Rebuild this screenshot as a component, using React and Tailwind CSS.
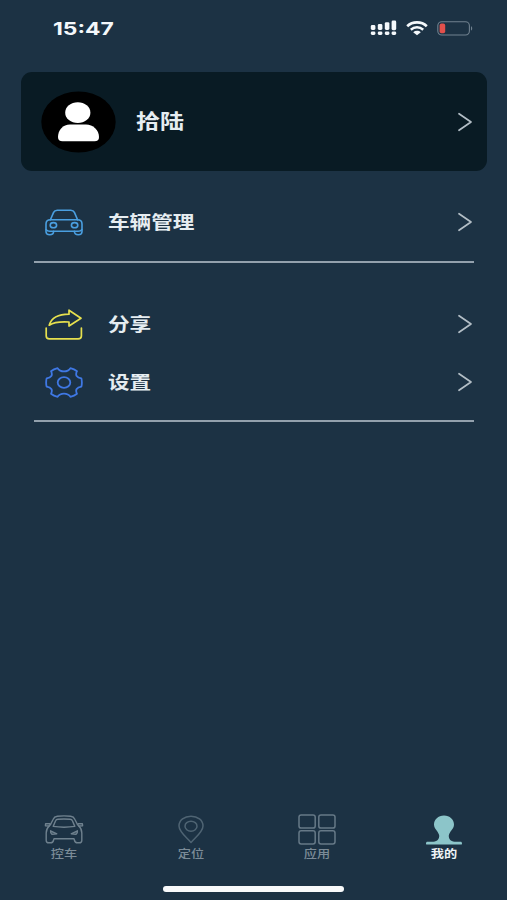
import clsx from "clsx";

const FONT = "font-['Inter','Noto_Sans_CJK_SC',sans-serif]";

// -------------------------
// ICONS
// -------------------------
function SignalIcon() {
  return (
    <svg width="27" height="16" viewBox="0 0 27 16" fill="#f4f8fb">
      <rect x="0.8" y="5" width="4.6" height="5" rx="1.4" />
      <rect x="7.8" y="4" width="4.6" height="6" rx="1.4" />
      <rect x="14.8" y="2.2" width="4.6" height="7.8" rx="1.4" />
      <rect x="21.6" y="0.6" width="4.6" height="9.6" rx="1.4" />
      <rect x="0.8" y="11.4" width="4.6" height="3.6" rx="1.4" />
      <rect x="7.8" y="11.4" width="4.6" height="3.6" rx="1.4" />
      <rect x="14.8" y="11.4" width="4.6" height="3.6" rx="1.4" />
      <rect x="21.6" y="11.4" width="4.6" height="3.6" rx="1.4" />
    </svg>
  );
}

function WifiIcon() {
  return (
    <svg width="22" height="15" viewBox="0 0 22 15" fill="none" stroke="#f4f8fb">
      <path d="M1.2 5.2C6.6 0.2 15.4 0.2 20.8 5.2" strokeWidth="2.7" />
      <path d="M4.8 8.7C8.4 5.5 13.6 5.5 17.2 8.7" strokeWidth="2.5" />
      <path d="M11 14.2L7.2 11.2C9.4 9.4 12.6 9.4 14.8 11.2Z" fill="#f4f8fb" stroke="none" />
    </svg>
  );
}

function BatteryIcon() {
  return (
    <svg width="36" height="15" viewBox="0 0 36 15" fill="none">
      <rect x="0.8" y="0.8" width="31.6" height="13.2" rx="4" stroke="#70818f" strokeWidth="1.1" />
      <rect x="2.6" y="2.6" width="5.6" height="9.6" rx="1.8" fill="#e2504c" />
      <path d="M34 5.2C35.6 5.8 35.6 9 34 9.6Z" fill="#70818f" />
    </svg>
  );
}

function Chevron() {
  return (
    <svg className="shrink-0" width="16" height="20" viewBox="0 0 16 20" fill="none" stroke="#b3bec6" strokeWidth="1.7" strokeLinecap="round" strokeLinejoin="round">
      <path d="M2 1.7L14 10L2 18.3" />
    </svg>
  );
}

function Avatar() {
  return (
    <svg width="75" height="62" viewBox="0 0 75 62">
      <ellipse cx="37.5" cy="31" rx="37.2" ry="30.6" fill="#000" />
      <g fill="#fff">
        <ellipse cx="36.8" cy="21.7" rx="12.6" ry="10.4" />
        <path d="M17 46C17 39 22 33.5 29 33.5H45C52 33.5 58 39 58 46C58 49 56.5 50.2 53.5 50.2H21.5C18.5 50.2 17 49 17 46Z" />
      </g>
    </svg>
  );
}

function CarIcon() {
  return (
    <svg width="38" height="27" viewBox="0 0 38 27" fill="none" stroke="#4a9fe0" strokeWidth="1.6" strokeLinejoin="round" strokeLinecap="round">
      <path d="M5.4 10.8L8.6 3.4C9.3 1.8 10.4 1.2 12.2 1.2H25.8C27.6 1.2 28.7 1.8 29.4 3.4L32.6 10.8" />
      <path d="M5.6 10.8H32.4C35.4 10.8 37 12.4 37 15V22.4C37 24.6 35.6 25.7 33.2 25.7C30.8 25.7 29.4 24.6 29.4 22.2H8.6C8.6 24.6 7.2 25.7 4.8 25.7C2.4 25.7 1 24.6 1 22.4V15C1 12.4 2.6 10.8 5.6 10.8Z" />
      <path d="M1.2 20.6C2 21.8 3.2 22.2 4.8 22.2H8.6M36.8 20.6C36 21.8 34.8 22.2 33.2 22.2H29.4" />
      <ellipse cx="8.4" cy="16.2" rx="3.2" ry="2.6" />
      <ellipse cx="29.6" cy="16.2" rx="3.2" ry="2.6" />
    </svg>
  );
}

function ShareIcon() {
  return (
    <svg width="38" height="31" viewBox="0 0 38 31" fill="none" stroke="#e6e04e" strokeWidth="1.7" strokeLinejoin="round" strokeLinecap="round">
      <path d="M4.2 16.2C6.5 8.8 13 5.2 24 5.2V1.2L36 9.2L24 17V13C15 12.4 8.8 13.2 4.2 16.2Z" />
      <path d="M1.2 19V27C1.2 29 2.2 29.8 4.4 29.8H33.2C35.4 29.8 36.4 29 36.4 27V19" />
    </svg>
  );
}

function GearIcon() {
  return (
    <svg width="38" height="31" viewBox="0 0 38 31" fill="none" stroke="#3f78e4" strokeWidth="1.8" strokeLinejoin="round">
      <path d="M12.6 1.2C14 3.4 16 4.4 19 4.4C22 4.4 24 3.4 25.4 1.2C28 1.8 30.2 2.8 32 4.2C30 8 31.6 10.8 36.4 11.4C37 14 37 17 36.4 19.6C31.6 20.2 30 23 32 26.8C30.2 28.2 28 29.2 25.4 29.8C24 27.6 22 26.6 19 26.6C16 26.6 14 27.6 12.6 29.8C10 29.2 7.8 28.2 6 26.8C8 23 6.4 20.2 1.6 19.6C1 17 1 14 1.6 11.4C6.4 10.8 8 8 6 4.2C7.8 2.8 10 1.8 12.6 1.2Z" />
      <ellipse cx="19" cy="15.5" rx="6.3" ry="5.3" />
    </svg>
  );
}

function TabCarIcon() {
  return (
    <svg width="40" height="29" viewBox="0 0 40 29" fill="none" stroke="#6f818e" strokeWidth="1.4" strokeLinejoin="round" strokeLinecap="round">
      <path d="M6.5 9.5L9.2 4.2C10 2.2 11.2 1.5 13.4 1.2C17.8 0.8 22.2 0.8 26.6 1.2C28.8 1.5 30 2.2 30.8 4.2L33.5 9.5" />
      <path d="M6.5 9.5L5.2 11L1.4 10.8L1.6 8.8L5.8 8.6M33.5 9.5L34.8 11L38.6 10.8L38.4 8.8L34.2 8.6" />
      <path d="M5.2 11C3 13 2.2 15 2.2 18V25.4C2.2 27.2 3 27.8 4.8 27.8H6.6C8.6 27.8 9.2 27 9.6 25L10 23.8H30L30.4 25C30.8 27 31.4 27.8 33.4 27.8H35.2C37 27.8 37.8 27.2 37.8 25.4V18C37.8 15 37 13 34.8 11" />
      <path d="M9.2 11.4L11.6 5.8C12 4.7 12.7 4.3 14 4.2C18 3.9 22 3.9 26 4.2C27.3 4.3 28 4.7 28.4 5.8L30.8 11.4C24 12.4 16 12.4 9.2 11.4Z" />
      <path d="M6.6 15.8L12.8 18.8L8 19.4C6.8 18.8 6.4 17.4 6.6 15.8ZM33.4 15.8L27.2 18.8L32 19.4C33.2 18.8 33.6 17.4 33.4 15.8Z" fill="#6f818e" fillOpacity="0.4" />
    </svg>
  );
}

function PinIcon() {
  return (
    <svg width="26" height="29" viewBox="0 0 26 29" fill="none" stroke="#4f6473" strokeWidth="1.5" strokeLinejoin="round">
      <path d="M13 27.5C7.5 21.5 1 16.6 1 11C1 5.2 6.4 1.2 13 1.2C19.6 1.2 25 5.2 25 11C25 16.6 18.5 21.5 13 27.5Z" />
      <ellipse cx="13" cy="11.2" rx="6" ry="5" />
    </svg>
  );
}

function GridIcon() {
  return (
    <svg width="38" height="31" viewBox="0 0 38 31" fill="none" stroke="#667987" strokeWidth="1.5">
      <rect x="1" y="0.9" width="16.2" height="13.2" rx="2.2" />
      <rect x="20.8" y="0.9" width="16.2" height="13.2" rx="2.2" />
      <rect x="1" y="16.8" width="16.2" height="13.2" rx="2.2" />
      <rect x="20.8" y="16.8" width="16.2" height="13.2" rx="2.2" />
    </svg>
  );
}

function MeIcon() {
  return (
    <svg width="38" height="30" viewBox="0 0 38 30" fill="#8cc5c9">
      <path d="M19 0.4C24.8 0.4 29 4.4 29 9.4C29 14 24.2 16.6 23.8 20.6C23.6 24 25.4 26.4 29.6 26.8H35.4C36.5 26.8 37 27.4 37 28.4C37 29.3 36.6 29.6 36 29.6H2C1.4 29.6 1 29.3 1 28.4C1 27.4 1.5 26.8 2.6 26.8H8.4C12.6 26.4 14.4 24 14.2 20.6C13.8 16.6 9 14 9 9.4C9 4.4 13.2 0.4 19 0.4Z" />
    </svg>
  );
}

function MenuRow({ icon, label }) {
  return (
    <button className="flex h-[58px] w-full items-center pl-[11px]">
      <span className="flex w-[38px] justify-center">{icon}</span>
      <span className="ml-[25px] origin-left scale-x-[1.2] pt-[1px] text-lg leading-none font-bold text-[#e6edf1]">
        {label}
      </span>
      <span className="mr-[1px] ml-auto">
        <Chevron />
      </span>
    </button>
  );
}

const tabs = [
  { label: "控车", icon: <TabCarIcon /> },
  { label: "定位", icon: <PinIcon /> },
  { label: "应用", icon: <GridIcon /> },
  { label: "我的", icon: <MeIcon />, active: true },
];

export default function App() {
  return (
    <div className={clsx("flex h-[900px] w-[507px] flex-col overflow-hidden bg-[#1c3244]", FONT)}>
      {/* Status bar */}
      <header className="flex h-[72px] shrink-0 items-start justify-between pt-[19px] pr-[34px] pl-[53px]">
        <span className="origin-left scale-x-[1.27] text-lg leading-5 font-bold text-[#f4f8fb]">
          15:47
        </span>
        <div className="flex items-center pt-[1px]">
          <SignalIcon />
          <span className="ml-[9px]"><WifiIcon /></span>
          <span className="ml-[9px]"><BatteryIcon /></span>
        </div>
      </header>

      {/* Profile card */}
      <button className="mr-5 ml-[21px] flex h-[99px] shrink-0 items-center rounded-[11px] bg-[#091b24] pr-3.5 pl-5">
        <Avatar />
        <span className="ml-5 origin-left scale-x-[1.2] text-xl leading-none font-bold text-[#e6edf1]">
          拾陆
        </span>
        <span className="ml-auto">
          <Chevron />
        </span>
      </button>

      <main className="mr-[33px] ml-[34px] flex-1">
        <section className="border-b-2 border-[#93a1ad] pt-[22px] pb-[10px]">
          <MenuRow icon={<CarIcon />} label="车辆管理" />
        </section>
        <section className="border-b-2 border-[#93a1ad] pt-8 pb-[9px]">
          <MenuRow icon={<ShareIcon />} label="分享" />
          <MenuRow icon={<GearIcon />} label="设置" />
        </section>
      </main>

      {/* Bottom tabs */}
      <nav className="grid h-[73px] shrink-0 grid-cols-4 pl-[1px]">
        {tabs.map((t) => (
          <button key={t.label} className="flex flex-col items-center">
            <span className="flex h-[33px] items-center">{t.icon}</span>
            <span
              className={clsx(
                "scale-x-[1.2] text-[11px] leading-4",
                t.active ? "font-bold text-[#eef3f6]" : "font-medium text-[#7b8b97]"
              )}
            >
              {t.label}
            </span>
          </button>
        ))}
      </nav>
      <div className="flex h-[14px] shrink-0 justify-center">
        <div className="h-1.5 w-[181px] rounded-full bg-[#f8fafb]" />
      </div>
    </div>
  );
}
